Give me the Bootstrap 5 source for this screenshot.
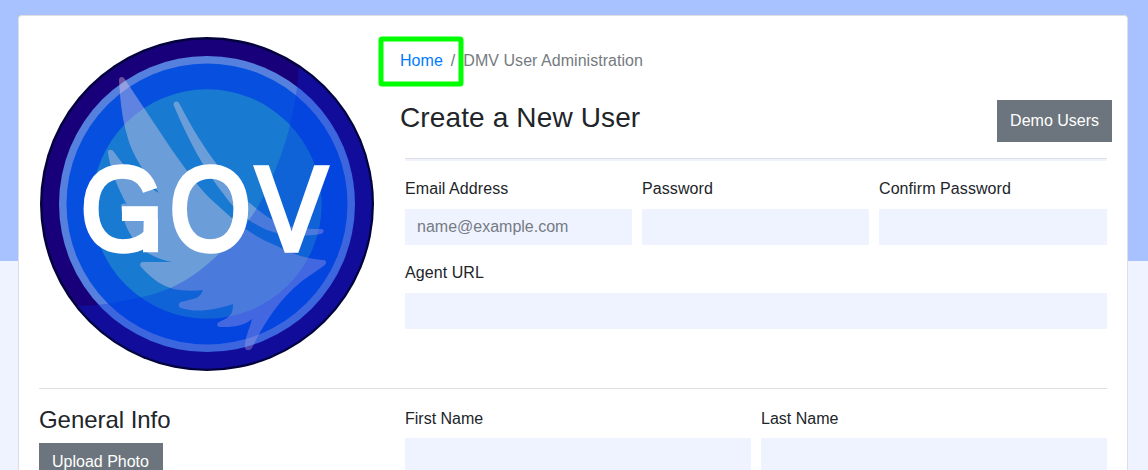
<!DOCTYPE html>
<html lang="en">
<head>
<meta charset="utf-8">
<meta name="viewport" content="width=device-width, initial-scale=1">
<title>Create a New User</title>
<link href="https://cdn.jsdelivr.net/npm/bootstrap@5.3.0/dist/css/bootstrap.min.css" rel="stylesheet">
<style>
body{font-family:"Liberation Sans",Arial,sans-serif;color:#212529;background:linear-gradient(#a8c1ff 261px,#eff3ff 261px) no-repeat #eff3ff;height:470px;overflow:hidden}
.page-card{width:1110px;height:455px;overflow:hidden;margin:15px 0 0 18px;border:1px solid #dfdfe1;border-bottom:0;border-radius:4px 4px 0 0;padding:20px 20px 0}
.seal-col{width:361px;height:352px;flex:none}
.seal-col svg{display:block;margin-left:-1px}
.intro{width:712px;flex:none;margin-right:-5px}
.breadcrumb{--bs-breadcrumb-divider-color:#6c757d;--bs-breadcrumb-item-active-color:#757b80;margin:0 0 27px;padding-top:13px;letter-spacing:.04px}
.breadcrumb a{color:#007bff;text-decoration:none}
h1{font-size:28px;line-height:33.6px;font-weight:400;margin:1px 0 0;letter-spacing:.13px}
h2{font-size:24px;line-height:28.8px;font-weight:400;margin:0;letter-spacing:-.05px}
.btn-square{--bs-btn-bg:#6c757d;--bs-btn-border-color:#6c757d;--bs-btn-color:#fff;--bs-btn-border-radius:0;height:42px;padding:8px 12px;border-radius:0}
.upload{width:124px;padding:6px 12px 10px;text-align:left}
.form-label{display:block;margin:0 0 8px;line-height:24px}
.form-control{height:36px;border:0;border-radius:0;background:#eff3ff;padding:6px 12px;font-size:16px}
.form-control::placeholder{color:#757b83}
.fields{padding:0 5px}
.fields .form-label{letter-spacing:.08px}
.names .form-label{padding-top:1px;margin-bottom:7px}
.account-grid{display:grid;grid-template-columns:227px 227px 1fr;gap:10px}
.rule-blue{height:3px;background:#eff3ff;border-top:1px solid #dfdfe4;margin:16px 0}
.rule-soft{height:2px;background:#f4f4f6;border-top:1px solid #dfe0e2}
.general-row{padding-top:17px}
.section-side{width:366px}
.g10{gap:10px}
.focus-frame{left:378px;top:36px;width:86px;height:51px}
</style>
</head>
<body>
<main class="card page-card">
  <div class="d-flex">
    <div class="seal-col">
      <svg width="336" height="336" viewBox="38 36 336 336" role="img" aria-label="GOV seal">
        <defs><clipPath id="disc"><circle cx="207" cy="204" r="165"/></clipPath></defs>
        <circle cx="207" cy="204" r="167" fill="#04023c"/>
        <circle cx="207" cy="204" r="164.5" fill="#19007b"/>
        <circle cx="207" cy="204" r="148" fill="#5580dd"/>
        <circle cx="207" cy="204" r="140.5" fill="#064fdf"/>
        <circle cx="207" cy="204" r="114.7" fill="#187bd1"/>
        <g fill="#f5d5e6" fill-opacity=".38">
          <path d="M124 78C122 76 119 77 119 80C120 99 122 118 127 135C132 156 145 172 159 193L150 188C137 180 125 168 114 152C112 149 107 149 108 153C111 173 119 190 127 205C124 202 120 204 121 208C124 226 132 241 145 251C153 257 163 260 172 262L143 262C140 262 139 265 142 268C152 279 164 288 179 290C188 291 196 291 203 290C201 295 198 298 193 299L181 302C178 303 178 307 181 308C198 313 214 310 233 304C233 315 230 317 219 322C216 324 217 327 220 327C232 327 242 327 252 319C249 331 245 336 245 348C246 351 250 351 252 348C262 327 278 300 302 281L325 265C327 262 326 260 323 260C307 259 294 255 277 246C248 234 235 221 214 202C200 190 187 171 172 150Z"/>
          <path d="M174 106C172 102 177 100 179 103C192 128 203 146 218 166C229 183 239 196 251 204C266 217 278 226 296 227C305 229 314 229 321 229C325 229 324 233 321 234C301 237 283 236 267 230C251 223 237 213 225 196C203 168 188 139 174 106Z"/>
        </g>
        <path clip-path="url(#disc)" d="M299 60C298 100 289 141 268 187C254 218 235 240 210 262C183 286 160 293 138 298C115 303 96 306 74 306V380H380V60Z" fill="#002be0" fill-opacity=".3"/>
        <g fill="#fff" stroke="#fff" stroke-width="5.5" font-family="Liberation Sans,Arial,sans-serif" font-size="119">
          <text x="80.7" y="249.6" textLength="82.5" lengthAdjust="spacingAndGlyphs">G</text>
          <text x="169.7" y="249.6" textLength="81" lengthAdjust="spacingAndGlyphs">O</text>
          <text x="256.3" y="249.6" textLength="70.5" lengthAdjust="spacingAndGlyphs">V</text>
        </g>
        <path d="M144 219H158V252.3H143Z" fill="#fff"/>
      </svg>
    </div>
    <div class="intro">
      <nav aria-label="breadcrumb"><ol class="breadcrumb"><li class="breadcrumb-item"><a href="#">Home</a></li><li class="breadcrumb-item active">DMV User Administration</li></ol></nav>
      <div class="d-flex justify-content-between align-items-start"><h1>Create a New User</h1><button class="btn btn-square">Demo Users</button></div>
      <div class="fields">
        <div class="rule-blue"></div>
        <div class="account-grid mb-3">
          <div><label class="form-label" for="email">Email Address</label><input class="form-control" id="email" type="email" placeholder="name@example.com"></div>
          <div><label class="form-label" for="pw">Password</label><input class="form-control" id="pw" type="password"></div>
          <div><label class="form-label" for="pw2">Confirm Password</label><input class="form-control" id="pw2" type="password"></div>
        </div>
        <label class="form-label" for="url">Agent URL</label><input class="form-control" id="url">
      </div>
    </div>
  </div>
  <div class="rule-soft"></div>
  <div class="d-flex general-row">
    <div class="flex-shrink-0 section-side"><h2>General Info</h2><button class="btn btn-square upload mt-2">Upload Photo</button></div>
    <div class="d-flex g10 flex-fill names">
      <div class="w-100"><label class="form-label" for="fn">First Name</label><input class="form-control" id="fn"></div>
      <div class="w-100"><label class="form-label" for="ln">Last Name</label><input class="form-control" id="ln"></div>
    </div>
  </div>
</main>
<svg class="focus-frame position-absolute" viewBox="378 36 86 51" aria-hidden="true"><rect x="381" y="39" width="80" height="45" rx="1" fill="none" stroke="#0f0" stroke-width="5" stroke-linejoin="round"/></svg>
<script src="https://cdn.jsdelivr.net/npm/bootstrap@5.3.0/dist/js/bootstrap.bundle.min.js"></script>
</body>
</html>
